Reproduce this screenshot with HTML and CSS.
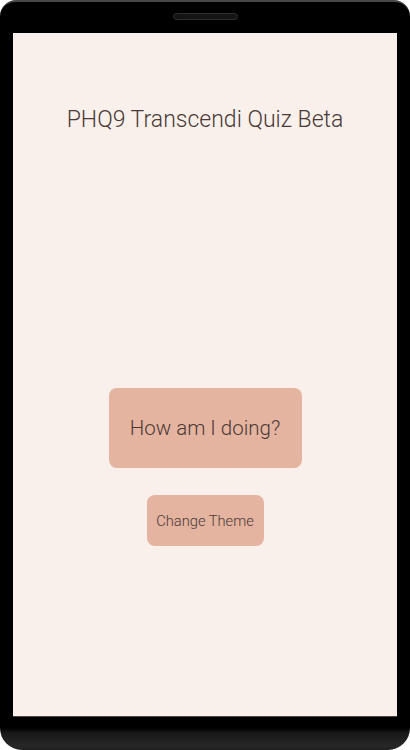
FILE: index.html
```html
<!DOCTYPE html>
<html>
<head>
<meta charset="utf-8">
<link rel="stylesheet" href="styles.css">
</head>
<body>
<div class="phone">
  <div class="top-bezel"><div class="speaker"></div></div>
  <div class="screen">
    <h1 class="title">PHQ9 Transcendi Quiz Beta</h1>
    <button class="btn btn-main">How am I doing?</button>
    <button class="btn btn-theme">Change Theme</button>
  </div>
  <div class="bottom-bezel"></div>
</div>
</body>
</html>
```
FILE: styles.css
```css
html, body {
  margin: 0;
  padding: 0;
  background: #ffffff;
}
.phone {
  width: 410px;
  height: 750px;
  box-sizing: border-box;
  border-radius: 16px 16px 22px 22px;
  border-top: 2px solid #474747;
  background: linear-gradient(to bottom, #000 0, #000 726px, #181818 731px, #272727 744px, #1c1c1c 750px);
  display: flex;
  flex-direction: column;
  overflow: hidden;
}
.top-bezel {
  height: 31px;
  display: flex;
  justify-content: center;
  padding-top: 11px;
  box-sizing: border-box;
}
.speaker {
  width: 63px;
  height: 5px;
  border-radius: 4px;
  background: #141414;
  border: 1px solid #2e2e2e;
}
.screen {
  margin: 0 13px;
  height: 684px;
  background: #f9f0eb;
  border-bottom: 1px solid #4a4444;
  box-sizing: border-box;
  display: flex;
  flex-direction: column;
  align-items: center;
  font-family: Roboto, "Liberation Sans", sans-serif;
  font-weight: 300;
  color: #4a3936;
}
.title {
  margin: 73px 0 0;
  font-size: 23px;
  line-height: 27px;
  font-weight: 300;
}
.btn {
  font-family: Roboto, "Liberation Sans", sans-serif;
  font-weight: 300;
  color: #4a3936;
  background: #e5b4a0;
  border: none;
  border-radius: 8px;
  padding: 0;
}
.btn-main {
  margin-top: 255px;
  width: 193px;
  height: 80px;
  font-size: 20.5px;
}
.btn-theme {
  margin-top: 27px;
  width: 117px;
  height: 51px;
  font-size: 14.7px;
}
.bottom-bezel {
  flex: 1;
}
```
